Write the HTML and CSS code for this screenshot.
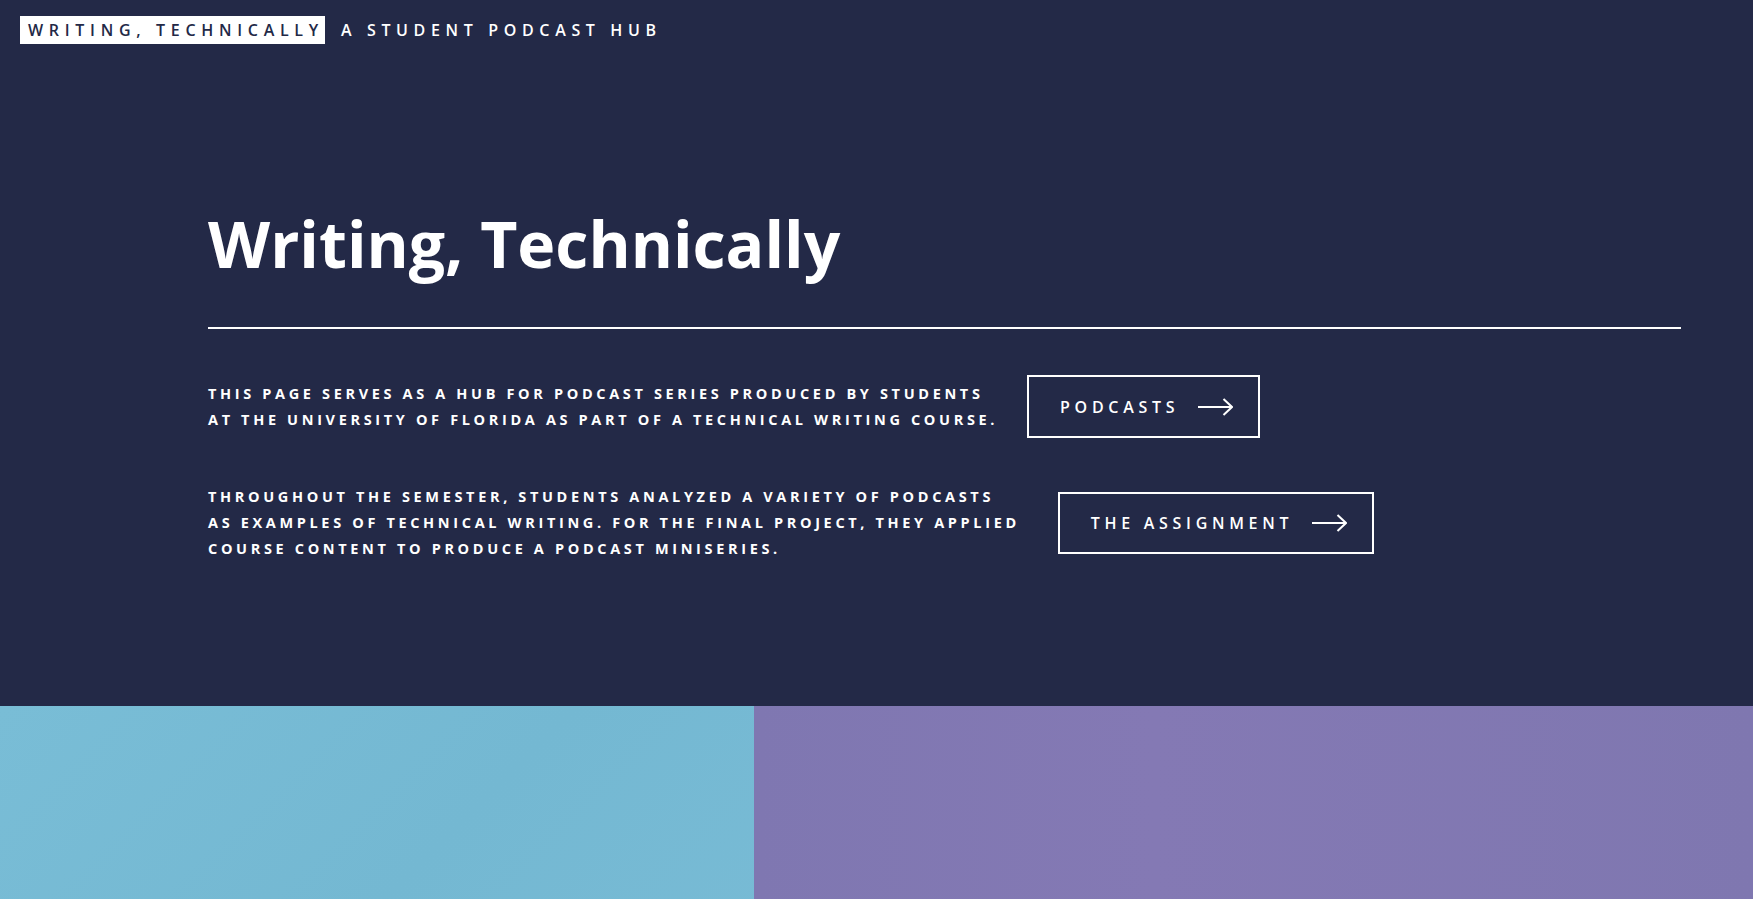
FILE: index.html
```html
<!DOCTYPE html>
<html lang="en">
<head>
<meta charset="utf-8">
<title>Writing, Technically</title>
<link rel="stylesheet" href="styles.css">
</head>
<body>
<section class="hero">
  <header class="topbar">
    <span class="brand">WRITING, TECHNICALLY</span>
    <span class="tagline">A STUDENT PODCAST HUB</span>
  </header>
  <div class="content">
    <h1 class="title">Writing, Technically</h1>
    <hr class="rule">
    <div class="row row-first">
      <p class="blurb">THIS PAGE SERVES AS A HUB FOR PODCAST SERIES PRODUCED BY STUDENTS<br>AT THE UNIVERSITY OF FLORIDA AS PART OF A TECHNICAL WRITING COURSE.</p>
      <a class="btn btn-podcasts" href="#">PODCASTS<svg class="arrow" width="35" height="18" viewBox="0 0 35 18"><path d="M0 9H34M25.5 1L34 9L25.5 17" fill="none" stroke="#fff" stroke-width="2"/></svg></a>
    </div>
    <div class="row row-second">
      <p class="blurb">THROUGHOUT THE SEMESTER, STUDENTS ANALYZED A VARIETY OF PODCASTS<br>AS EXAMPLES OF TECHNICAL WRITING. FOR THE FINAL PROJECT, THEY APPLIED<br>COURSE CONTENT TO PRODUCE A PODCAST MINISERIES.</p>
      <a class="btn btn-assign" href="#">THE ASSIGNMENT<svg class="arrow" width="35" height="18" viewBox="0 0 35 18"><path d="M0 9H34M25.5 1L34 9L25.5 17" fill="none" stroke="#fff" stroke-width="2"/></svg></a>
    </div>
  </div>
</section>
<section class="panels">
  <div class="panel panel-blue"></div>
  <div class="panel panel-purple"></div>
</section>
</body>
</html>
```
FILE: styles.css
```css
* { box-sizing: border-box; }
html, body { margin: 0; padding: 0; }
body {
  background: #232947;
  color: #fff;
  font-family: "Open Sans", "Noto Sans", sans-serif;
  overflow: hidden;
}
.hero {
  height: 706px;
  background: #232947;
}
.topbar {
  display: flex;
  align-items: center;
  gap: 16px;
  padding: 16px 20px 0;
}
.brand {
  display: flex;
  align-items: center;
  height: 28px;
  padding: 0 1px 0 8px;
  background: #fff;
  color: #232947;
  font-size: 16px;
  font-weight: 600;
  letter-spacing: 5.7px;
}
.tagline {
  font-size: 16px;
  font-weight: 600;
  letter-spacing: 5.65px;
}
.content {
  margin-left: 208px;
  width: 1473px;
  padding-top: 167px;
}
.title {
  margin: 0;
  font-size: 64.3px;
  line-height: 64px;
  font-weight: 700;
  letter-spacing: 0;
}
.rule {
  margin: 52px 0 0;
  border: 0;
  height: 2px;
  background: #fff;
}
.row {
  display: flex;
  align-items: center;
}
.row-first { margin-top: 46px; gap: 29px; }
.row-second { margin-top: 46px; gap: 38px; }
.blurb {
  margin: 0;
  font-size: 14.5px;
  line-height: 26px;
  font-weight: 700;
  letter-spacing: 3.65px;
  white-space: nowrap;
}
.btn {
  display: flex;
  align-items: center;
  height: 63px;
  padding: 0 25px 0 31px;
  border: 2px solid #fff;
  color: #fff;
  text-decoration: none;
  font-size: 16px;
  font-weight: 600;
  letter-spacing: 4.7px;
  flex-shrink: 0;
}
.btn-assign { height: 62px; }
.arrow {
  margin-left: 19px;
  display: block;
}
.panels {
  display: grid;
  grid-template-columns: 754px 1fr;
  height: 400px;
}
.panel-blue {
  background: linear-gradient(135deg, #79bdd6 0%, #74b8d2 50%, #79bcd6 100%);
}
.panel-purple {
  background: linear-gradient(90deg, #7f77b1 0%, #8479b4 40%, #7f77b0 100%);
}
```
